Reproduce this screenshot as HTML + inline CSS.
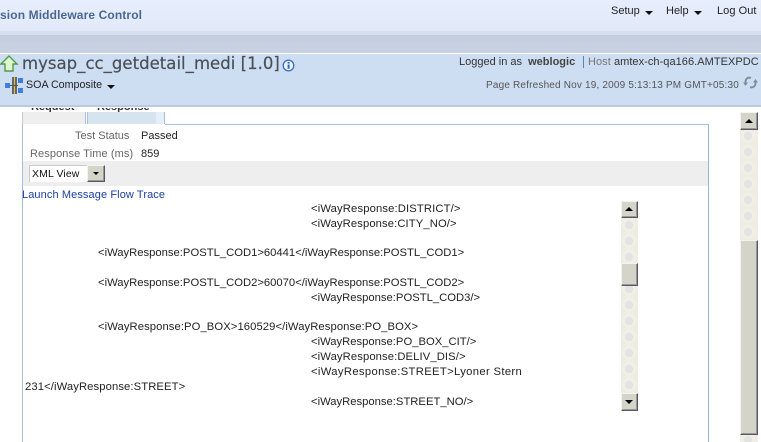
<!DOCTYPE html>
<html><head><meta charset="utf-8"><style>
html,body{margin:0;padding:0;width:761px;height:442px;overflow:hidden;background:#fff}
body{position:relative;font-family:"Liberation Sans",sans-serif;font-size:11px;color:#333}
.a{position:absolute;white-space:nowrap;line-height:13px}
.b{position:absolute}
.sb{position:absolute;background:#f0eee4;background-image:radial-gradient(circle,#e3e3e1 0 3.5px,#f2f1ea 5px,#efede2 8px);background-size:16px 16px}
.btn{position:absolute;box-sizing:border-box;background:#d5d4c8;border:1px solid;border-color:#f4f4ee #55586c #55586c #f4f4ee;box-shadow:inset -1px -1px 0 #9a9a90}
.up,.dn{position:absolute;width:0;height:0;border-left:4px solid transparent;border-right:4px solid transparent}
.up{border-bottom:4px solid #000}.dn{border-top:4px solid #000}
.x{color:#222;font-size:11.25px}
.tri{display:inline-block;width:0;height:0;border-left:4px solid transparent;border-right:4px solid transparent;border-top:4px solid #111;margin-left:5px;vertical-align:-1px}
</style></head><body>
<div class="b" style="left:0;top:0;width:761px;height:31px;background:linear-gradient(#e6edfc,#e2eafa)"></div>
<div class="b" style="left:0;top:31px;width:761px;height:4px;background:#d7dfee"></div>
<div class="b" style="left:0;top:35px;width:761px;height:18px;background:linear-gradient(#c2cddd,#c8d2e2)"></div>
<div class="b" style="left:0;top:53px;width:761px;height:1px;background:#fff"></div>
<div class="b" style="left:0;top:54px;width:761px;height:51px;background:#cddef3"></div>
<div class="b" style="left:0;top:105px;width:761px;height:2px;background:#b9cbe2"></div>

<div class="a" style="left:0;top:9px;font-size:12px;font-weight:bold;color:#49688f;letter-spacing:.12px">sion Middleware Control</div>
<div class="a" style="left:611px;top:5px;color:#222">Setup<i class="tri"></i></div>
<div class="a" style="left:666px;top:5px;color:#222">Help<i class="tri"></i></div>
<div class="a" style="left:717px;top:5px;color:#222;letter-spacing:.05px">Log Out</div>

<svg class="b" style="left:0;top:54px" width="20" height="20" viewBox="0 0 20 20"><path d="M9 2 L17 10 L13 10 L13 17 L5 17 L5 10 L1 10 Z" fill="#dff5d0" stroke="#4f9a4a" stroke-width="1.4"/></svg>
<div class="a" style="left:22px;top:54px;font-family:'DejaVu Sans',sans-serif;font-size:16.5px;line-height:20px;color:#4a4f57;letter-spacing:.03px;-webkit-text-stroke:.2px #4a4f57">mysap_cc_getdetail_medi [1.0]</div>
<svg class="b" style="left:282px;top:59px" width="13" height="13" viewBox="0 0 13 13"><circle cx="6.5" cy="6.5" r="5.3" fill="#eef4ff" stroke="#3f73c4" stroke-width="1.4"/><rect x="5.6" y="5.500" width="2" height="4.2" fill="#2f62b5"/><rect x="5.6" y="3" width="2" height="1.6" fill="#2f62b5"/></svg>
<svg class="b" style="left:5px;top:77px" width="19" height="17" viewBox="0 0 19 17"><rect x="0" y="6" width="5" height="5" fill="#3f7fd8"/><rect x="13" y="1" width="5" height="5" fill="#3f7fd8"/><rect x="13" y="11" width="5" height="5" fill="#3f7fd8"/><path d="M8 0V17M11 0V17" stroke="#333" stroke-width="1.4"/><path d="M9.500 0V17" stroke="#e6c23a" stroke-width="1.2"/><path d="M5 8.500H13" stroke="#555"/></svg>
<div class="a" style="left:26px;top:79px;color:#222;font-size:10.7px">SOA Composite<i class="tri"></i></div>

<div class="a" style="left:459px;top:56px;color:#333">Logged in as&nbsp; <b style="color:#444">weblogic</b></div>
<div class="b" style="left:583px;top:56px;width:1px;height:12px;background:#5a82bb"></div>
<div class="a" style="left:588px;top:56px;color:#777;letter-spacing:.05px">Host <span style="color:#333">amtex-ch-qa166.AMTEXPDC</span></div>
<div class="a" style="left:486px;top:79px;font-size:10px;color:#555;letter-spacing:.18px">Page Refreshed Nov 19, 2009 5:13:13 PM GMT+05:30</div>
<svg class="b" style="left:743px;top:75px" width="15" height="15" viewBox="0 0 15 15"><g fill="none" stroke="#7f8c9d" stroke-width="1.9"><path d="M8 2.800C4.500 2 2.200 4 2.500 8"/><path d="M7 12.200C10.500 13 12.800 11 12.500 7"/></g><path d="M0 7.500H5L2.500 11Z M10 7.500H15L12.500 4Z" fill="#7f8c9d"/></svg>

<!-- tabs -->
<div class="a" style="left:31px;top:101px;font-weight:bold;font-size:11px;color:#333;clip-path:inset(7px 0 0 0)">Request</div>
<div class="a" style="left:97px;top:101px;font-weight:bold;font-size:11px;color:#333;clip-path:inset(7px 0 0 0)">Response</div>
<div class="b" style="left:22px;top:112px;width:62px;height:12px;background:#eee;border-left:1px solid #c9c9c9;border-right:1px solid #dfe3ea"></div>
<div class="b" style="left:85px;top:112px;width:1px;height:12px;background:#a9bedb"></div>
<div class="b" style="left:87px;top:112px;width:78px;height:12px;background:linear-gradient(90deg,#d5e4ee 0 68px,#e6eff9 68px);border-left:1px solid #a9bedb;border-right:1px solid #a9bedb;box-sizing:border-box"></div>
<!-- panel -->
<div class="b" style="left:165px;top:124px;width:544px;height:1px;background:#a9bedb"></div>
<div class="b" style="left:22px;top:124px;width:1px;height:318px;background:#a9bedb"></div>
<div class="b" style="left:708px;top:124px;width:1px;height:318px;background:#98b2dc"></div>

<div class="a" style="left:75px;top:130px;color:#666">Test Status</div>
<div class="a" style="left:141px;top:130px;color:#222">Passed</div>
<div class="a" style="left:30px;top:148px;color:#666;letter-spacing:.1px">Response Time (ms)</div>
<div class="a" style="left:141px;top:148px;color:#222">859</div>
<div class="b" style="left:23px;top:161px;width:685px;height:25px;background:#eee"></div>
<div class="b" style="left:29px;top:165px;width:76px;height:17px;background:#fff;box-shadow:inset 1px 1px 0 #ccc"></div>
<div class="a" style="left:32px;top:168px;font-size:10.5px;color:#111;letter-spacing:.1px">XML View</div>
<div class="btn" style="left:87px;top:165px;width:18px;height:17px"><i class="dn" style="left:5px;top:6px;border-left-width:3px;border-right-width:3px;border-top-width:3px"></i></div>
<div class="a" style="left:22px;top:189px;color:#1b3fa0;letter-spacing:.1px">Launch Message Flow Trace</div>

<div class="a x" style="left:311px;top:203px;letter-spacing:.13px">&lt;iWayResponse:DISTRICT/&gt;</div>
<div class="a x" style="left:311px;top:218px;letter-spacing:.1px">&lt;iWayResponse:CITY_NO/&gt;</div>
<div class="a x" style="left:98px;top:247px">&lt;iWayResponse:POSTL_COD1&gt;60441&lt;/iWayResponse:POSTL_COD1&gt;</div>
<div class="a x" style="left:98px;top:277px">&lt;iWayResponse:POSTL_COD2&gt;60070&lt;/iWayResponse:POSTL_COD2&gt;</div>
<div class="a x" style="left:311px;top:292px">&lt;iWayResponse:POSTL_COD3/&gt;</div>
<div class="a x" style="left:98px;top:321px;letter-spacing:.08px">&lt;iWayResponse:PO_BOX&gt;160529&lt;/iWayResponse:PO_BOX&gt;</div>
<div class="a x" style="left:311px;top:336px">&lt;iWayResponse:PO_BOX_CIT/&gt;</div>
<div class="a x" style="left:311px;top:351px;letter-spacing:.1px">&lt;iWayResponse:DELIV_DIS/&gt;</div>
<div class="a x" style="left:311px;top:366px;letter-spacing:.34px">&lt;iWayResponse:STREET&gt;Lyoner Stern</div>
<div class="a x" style="left:25px;top:381px;letter-spacing:.1px">231&lt;/iWayResponse:STREET&gt;</div>
<div class="a x" style="left:311px;top:396px">&lt;iWayResponse:STREET_NO/&gt;</div>

<!-- inner scrollbar -->
<div class="sb" style="left:621px;top:201px;width:17px;height:209px"></div>
<div class="btn" style="left:621px;top:201px;width:17px;height:17px"><i class="up" style="left:3px;top:5px"></i></div>
<div class="btn" style="left:621px;top:263px;width:17px;height:23px"></div>
<div class="btn" style="left:621px;top:393px;width:17px;height:18px"><i class="dn" style="left:3px;top:6px"></i></div>
<!-- outer scrollbar -->
<div class="sb" style="left:740px;top:112px;width:18px;height:330px"></div>
<div class="btn" style="left:740px;top:112px;width:18px;height:18px"><i class="up" style="left:4px;top:6px"></i></div>
<div class="btn" style="left:740px;top:240px;width:18px;height:195px"></div>
</body></html>
